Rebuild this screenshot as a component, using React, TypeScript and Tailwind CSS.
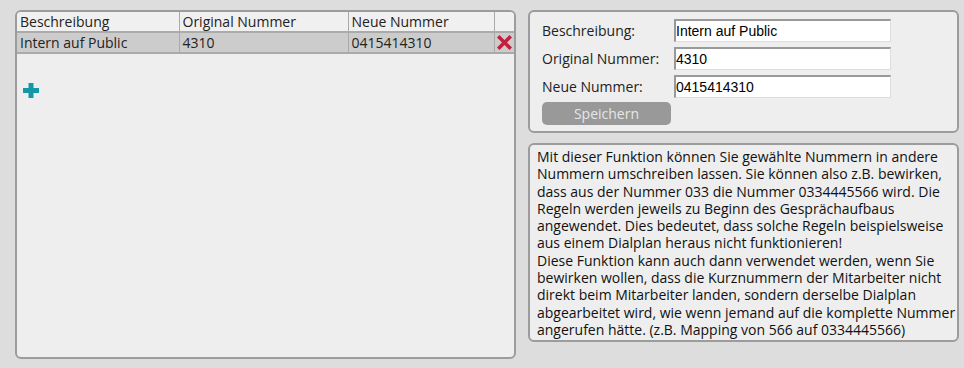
import React from 'react';

const rows = [{ desc: 'Intern auf Public', orig: '4310', neu: '0415414310' }];

const helpLines = [
  'Mit dieser Funktion können Sie gewählte Nummern in andere',
  'Nummern umschreiben lassen. Sie können also z.B. bewirken,',
  'dass aus der Nummer 033 die Nummer 0334445566 wird. Die',
  'Regeln werden jeweils zu Beginn des Gesprächaufbaus',
  'angewendet. Dies bedeutet, dass solche Regeln beispielsweise',
  'aus einem Dialplan heraus nicht funktionieren!',
  'Diese Funktion kann auch dann verwendet werden, wenn Sie',
  'bewirken wollen, dass die Kurznummern der Mitarbeiter nicht',
  'direkt beim Mitarbeiter landen, sondern derselbe Dialplan',
  'abgearbeitet wird, wie wenn jemand auf die komplette Nummer',
  'angerufen hätte. (z.B. Mapping von 566 auf 0334445566)',
];

const PlusIcon = () => (
  <svg width="16" height="15" viewBox="0 0 16 15">
    <path d="M5.5 0h5v5h5.5v5h-5.5v5h-5v-5H0V5h5.5z" fill="#1597a8" />
  </svg>
);

const DeleteIcon = () => (
  <svg width="17" height="17" viewBox="0 0 17 17">
    <path d="M1 3.5L3.5 1L8.5 6L13.5 1L16 3.5L11 8.5L16 13.5L13.5 16L8.5 11L3.5 16L1 13.5L6 8.5z" fill="#c31f3f" />
  </svg>
);

const Field = ({ label, value }: { label: string; value: string }) => (
  <div className="flex items-center h-[28px]">
    <label className="w-[132px] text-[14px] text-[#222]">{label}</label>
    <input
      readOnly
      value={value}
      className="w-[217px] h-[23px] bg-white border-t-2 border-l-2 border-[#999] border-r border-b border-r-[#ddd] border-b-[#ddd] px-0 text-[14px] text-black outline-none"
      style={{ fontFamily: '"Liberation Sans", Arial, sans-serif' }}
    />
  </div>
);

export default function App() {
  return (
    <div
      className="w-[964px] h-[368px] bg-[#dddddd] flex gap-[12px] pl-[15px] pt-[10px] text-[#222]"
      style={{ fontFamily: '"Open Sans", "DejaVu Sans", sans-serif' }}
    >
      {/* mapping table */}
      <div className="w-[501px] h-[349px] bg-[#eeeeee] border-2 border-[#9c9c9c] rounded-[6px] overflow-hidden flex flex-col">
        <table className="w-full border-collapse text-[14px] leading-[19px]">
          <thead>
            <tr className="bg-[#f0f0f0]">
              <th className="w-[162px] text-left font-normal px-[3px] border-r border-b-2 border-[#aaa]">Beschreibung</th>
              <th className="w-[169px] text-left font-normal px-[3px] border-r border-b-2 border-[#aaa]">Original Nummer</th>
              <th className="w-[146px] text-left font-normal px-[3px] border-r border-b-2 border-[#aaa]">Neue Nummer</th>
              <th className="border-b-2 border-[#aaa]"></th>
            </tr>
          </thead>
          <tbody>
            {rows.map(r => (
              <tr key={r.orig} className="bg-[#cccccc]">
                <td className="px-[3px] border-r border-b-2 border-[#aaa]">{r.desc}</td>
                <td className="px-[3px] border-r border-b-2 border-[#aaa]">{r.orig}</td>
                <td className="px-[3px] border-r border-b-2 border-[#aaa]">{r.neu}</td>
                <td className="border-b-2 border-[#aaa] p-0">
                  <div className="flex justify-center"><DeleteIcon /></div>
                </td>
              </tr>
            ))}
          </tbody>
        </table>
        <div className="pl-[6px] pt-[29px]">
          <PlusIcon />
        </div>
      </div>

      {/* form + help */}
      <div className="flex flex-col gap-[10px]">
        <div className="w-[431px] h-[123px] bg-[#eeeeee] border-2 border-[#9c9c9c] rounded-[6px] pl-[12px] pt-[4px]">
          <Field label="Beschreibung:" value="Intern auf Public" />
          <Field label="Original Nummer:" value="4310" />
          <Field label="Neue Nummer:" value="0415414310" />
          <button className="mt-[2px] w-[129px] h-[23px] bg-[#999999] rounded-[5px] text-[14px] text-[#e6e6e6]">
            Speichern
          </button>
        </div>
        <div className="w-[431px] h-[199px] bg-[#eeeeee] border-2 border-[#9c9c9c] rounded-[6px] pl-[7px] pt-[3px] text-[14px] leading-[17.3px] text-[#111]">
          {helpLines.map(line => (
            <div key={line} className="whitespace-nowrap">{line}</div>
          ))}
        </div>
      </div>
    </div>
  );
}
